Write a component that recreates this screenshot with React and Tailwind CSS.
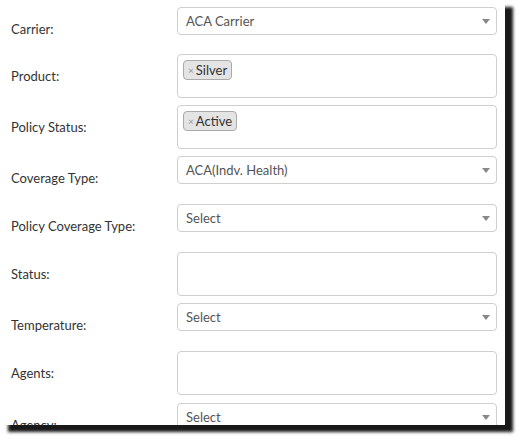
import React from 'react'

const ROWS = [
  { label: 'Carrier:', kind: 'select', value: 'ACA Carrier', h: 'h-[47px]' },
  { label: 'Product:', kind: 'multi', tags: ['Silver'], h: 'h-[51px]' },
  { label: 'Policy Status:', kind: 'multi', tags: ['Active'], h: 'h-[51px]' },
  { label: 'Coverage Type:', kind: 'select', value: 'ACA(Indv. Health)', h: 'h-[48px]' },
  { label: 'Policy Coverage Type:', kind: 'select', value: 'Select', h: 'h-[48px]' },
  { label: 'Status:', kind: 'multi', tags: [], h: 'h-[51px]' },
  { label: 'Temperature:', kind: 'select', value: 'Select', h: 'h-[48px]' },
  { label: 'Agents:', kind: 'multi', tags: [], h: 'h-[52px]' },
  { label: 'Agency:', kind: 'select', value: 'Select', h: 'h-[48px]' },
]

function SelectBox({ value }) {
  return (
    <div className="h-[28px] w-[320px] border border-[#cfcfcf] rounded-[4px] bg-white flex items-center justify-between pl-[8px] pr-[6px]">
      <span className="text-[13px] text-[#555] leading-none">{value}</span>
      <svg width="8" height="5" viewBox="0 0 8 5">
        <path d="M0 0 L8 0 L4 5 Z" fill="#888" />
      </svg>
    </div>
  )
}

function MultiBox({ tags }) {
  return (
    <div className="h-[44px] w-[320px] border border-[#cfcfcf] rounded-[4px] bg-white pl-[5px] pt-[5px] flex items-start gap-1">
      {tags.map(t => (
        <span key={t} className="h-[20px] flex items-center px-[4px] border border-[#aaa] rounded-[4px] bg-[#e4e4e4] text-[13px] text-[#333] leading-none">
          <span className="text-[10px] text-[#999] mr-[2px]">×</span>
          {t}
        </span>
      ))}
    </div>
  )
}

export default function App() {
  return (
    <div className="w-[520px] h-[442px] bg-white" style={{ fontFamily: 'Lato, "Open Sans", sans-serif' }}>
      <div className="w-[505px] h-[425px] bg-white overflow-hidden shadow-[8px_7px_3px_rgba(0,0,0,0.9)]">
        <div className="pt-[7px]">
          {ROWS.map(r => (
            <div key={r.label} className={`flex items-start ${r.h}`}>
              <div className="w-[177px] shrink-0 pl-[11px] pt-[13px] text-[13px] leading-[18px] text-[#333]">
                {r.label}
              </div>
              {r.kind === 'select' ? <SelectBox value={r.value} /> : <MultiBox tags={r.tags} />}
            </div>
          ))}
        </div>
      </div>
    </div>
  )
}
